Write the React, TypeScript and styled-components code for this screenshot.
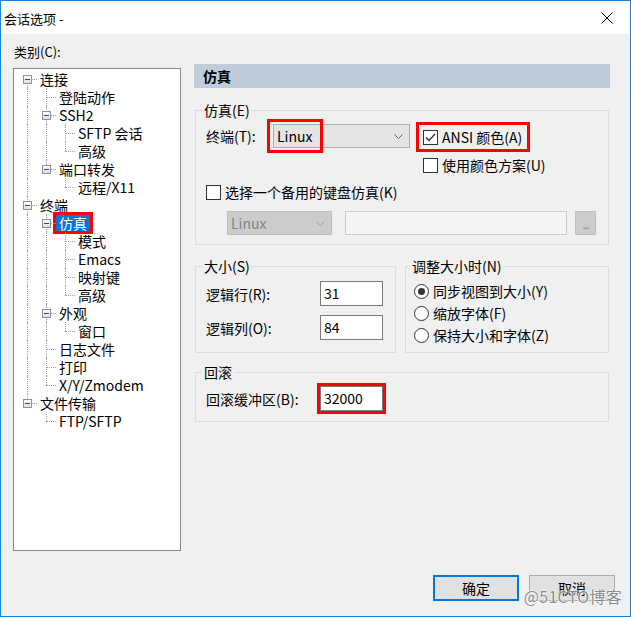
import React from 'react'
import styled, { createGlobalStyle } from 'styled-components'

const FONT = `"Noto Sans CJK SC", "Noto Sans", sans-serif`

const GlobalStyle = createGlobalStyle`
  html, body {
    margin: 0;
    padding: 0;
    background: #fff;
  }
  body {
    font-family: ${FONT};
    font-size: 14px;
    color: #000;
  }
  * {
    box-sizing: border-box;
  }
`

const Window = styled.div`
  width: 631px;
  height: 617px;
  border: 1px solid #1883d7;
  display: flex;
  flex-direction: column;
  overflow: hidden;
`

const TitleBar = styled.div`
  height: 33px;
  flex: none;
  background: #fff;
  display: flex;
  align-items: center;
  justify-content: space-between;
  padding-left: 3px;
`

const Title = styled.span`
  font-size: 13px;
  line-height: 16px;
  margin-top: 2px;
`

const CloseButton = styled.div`
  width: 46px;
  height: 33px;
  display: flex;
  align-items: center;
  justify-content: center;
`

const Body = styled.div`
  flex: 1;
  background: #f0f0f0;
  padding: 10px 15px 15px 12px;
  display: flex;
  flex-direction: column;
`

const Main = styled.div`
  display: flex;
  gap: 13px;
  height: 507px;
`

const LeftCol = styled.div`
  width: 168px;
  display: flex;
  flex-direction: column;
`

const CategoryLabel = styled.div`
  height: 24px;
  font-size: 13px;
  line-height: 16px;
  padding-left: 1px;
`

const TreeBox = styled.div`
  flex: 1;
  background: #fff;
  border: 1px solid #828790;
  padding: 1px 0 0 4px;
`

const TreeRow = styled.div`
  height: 18px;
  display: flex;
  align-items: center;
`

const Guide = styled.span<{ $up?: boolean; $down?: boolean; $right?: boolean }>`
  position: relative;
  width: 19px;
  height: 18px;
  flex: none;
  display: flex;
  justify-content: center;
  align-items: flex-start;

  &::before {
    content: '';
    display: ${p => (p.$up || p.$down ? 'block' : 'none')};
    position: absolute;
    left: 9px;
    top: ${p => (p.$up ? 0 : 9)}px;
    bottom: ${p => (p.$down ? 0 : 9)}px;
    border-left: 1px dotted #a0a0a0;
  }

  &::after {
    content: '';
    display: ${p => (p.$right ? 'block' : 'none')};
    position: absolute;
    left: 9px;
    right: 0;
    top: 9px;
    border-top: 1px dotted #a0a0a0;
  }
`

const Expander = styled.span`
  position: relative;
  z-index: 1;
  width: 9px;
  height: 9px;
  margin-top: 5px;
  border: 1px solid #919191;
  background: linear-gradient(#ffffff, #dedede);
  display: flex;
  align-items: center;
  justify-content: center;

  &::before {
    content: '';
    width: 5px;
    height: 1px;
    background: #2c4a86;
  }
`

const NodeLabel = styled.span<{ $selected?: boolean }>`
  height: 16px;
  line-height: 16px;
  padding: 0 3px;
  white-space: nowrap;
  background: ${p => (p.$selected ? '#0078d7' : 'transparent')};
  color: ${p => (p.$selected ? '#fff' : '#000')};
  outline: ${p => (p.$selected ? '3px solid #f00' : 'none')};
`

const RightCol = styled.div`
  width: 416px;
  margin-top: 20px;
  display: flex;
  flex-direction: column;
`

const PageHeader = styled.div`
  height: 24px;
  background: #bfcddb;
  font-weight: bold;
  font-size: 14px;
  line-height: 24px;
  padding-left: 9px;
`

const Groups = styled.div`
  padding: 0 1px;
  display: flex;
  flex-direction: column;
`

const GroupBox = styled.fieldset<{ $mt?: number; $w?: number; $pad?: string }>`
  margin: ${p => p.$mt ?? 0}px 0 0;
  border: 1px solid #dcdcdc;
  padding: ${p => p.$pad ?? '6px 9px 9px 10px'};
  min-width: 0;
  ${p => (p.$w ? `width: ${p.$w}px; flex: none;` : 'flex: 1;')}
`

const Legend = styled.legend`
  padding: 0 2px;
  margin-left: -4px;
  font-size: 14px;
  line-height: 16px;
`

const GroupRow = styled.div`
  display: flex;
  gap: 9px;
  margin-top: 13px;
`

const TermRow = styled.div`
  display: flex;
  align-items: flex-start;
`

const FieldLabel = styled.span<{ $w: number }>`
  width: ${p => p.$w}px;
  flex: none;
  height: 24px;
  line-height: 24px;
  white-space: nowrap;
`

const Select = styled.div<{ $w: number; $disabled?: boolean }>`
  position: relative;
  width: ${p => p.$w}px;
  height: 24px;
  flex: none;
  border: 1px solid ${p => (p.$disabled ? '#bfbfbf' : '#adadad')};
  background: ${p => (p.$disabled ? '#cccccc' : '#e5e5e5')};
  color: ${p => (p.$disabled ? '#838383' : '#000')};
  display: flex;
  align-items: center;
  justify-content: space-between;
  padding: 0 6px 0 3px;
  line-height: 22px;
`

const Mark = styled.span<{ $l: number; $t: number; $w: number; $h: number }>`
  position: absolute;
  left: ${p => p.$l}px;
  top: ${p => p.$t}px;
  width: ${p => p.$w}px;
  height: ${p => p.$h}px;
  border: 3px solid #f00;
  pointer-events: none;
`

const CheckCol = styled.div`
  margin-left: 13px;
  margin-top: -1px;
  display: flex;
  flex-direction: column;
`

const CheckRow = styled.label<{ $h?: number; $mt?: number; $marked?: boolean }>`
  position: relative;
  display: flex;
  align-items: center;
  gap: 4px;
  height: ${p => p.$h ?? 28}px;
  margin-top: ${p => p.$mt ?? 0}px;
  white-space: nowrap;
  align-self: flex-start;

  &::after {
    content: '';
    display: ${p => (p.$marked ? 'block' : 'none')};
    position: absolute;
    left: -7px;
    right: -8px;
    top: -1px;
    bottom: -1px;
    border: 3px solid #f00;
  }
`

const CheckBox = styled.span`
  width: 15px;
  height: 15px;
  flex: none;
  border: 1px solid #333;
  background: #fff;
  display: flex;
  align-items: center;
  justify-content: center;
`

const AltRow = styled.div`
  display: flex;
  align-items: center;
  margin-top: 9px;
  padding-left: 21px;
  height: 24px;
`

const TextBox = styled.div<{ $w: number; $disabled?: boolean; $ml?: number }>`
  width: ${p => p.$w}px;
  height: ${p => (p.$disabled ? 24 : 25)}px;
  flex: none;
  margin-left: ${p => p.$ml ?? 0}px;
  border: 1px solid ${p => (p.$disabled ? '#cccccc' : '#7a7a7a')};
  background: ${p => (p.$disabled ? '#f4f4f4' : '#fff')};
  padding-left: 3px;
  line-height: 23px;
  outline: none;
`

const MarkedBox = styled(TextBox)`
  outline: 3px solid #f00;
  outline-offset: 0px;
`

const BrowseButton = styled.div`
  width: 21px;
  height: 24px;
  margin-left: 8px;
  flex: none;
  border: 1px solid #bfbfbf;
  background: #cccccc;
  color: #838383;
  font-size: 11px;
  line-height: 24px;
  text-align: center;
  letter-spacing: -1px;
`

const FormRow = styled.div<{ $mt?: number }>`
  display: flex;
  align-items: center;
  height: 25px;
  margin-top: ${p => p.$mt ?? 0}px;
`

const RadioRow = styled.label`
  display: flex;
  align-items: center;
  gap: 4px;
  height: 22px;
  white-space: nowrap;
`

const Radio = styled.span<{ $on?: boolean }>`
  width: 15px;
  height: 15px;
  flex: none;
  border: 1px solid #333;
  border-radius: 50%;
  background: #fff;
  display: flex;
  align-items: center;
  justify-content: center;

  &::before {
    content: '';
    display: ${p => (p.$on ? 'block' : 'none')};
    width: 7px;
    height: 7px;
    border-radius: 50%;
    background: #333;
  }
`

const Footer = styled.div`
  position: relative;
  margin-top: auto;
  display: flex;
  justify-content: flex-end;
  gap: 10px;
  height: 26px;
`

const Button = styled.div<{ $default?: boolean }>`
  width: 86px;
  height: 26px;
  border: ${p => (p.$default ? '2px solid #0078d7' : '1px solid #adadad')};
  background: #e1e1e1;
  display: flex;
  align-items: center;
  justify-content: center;
  font-size: 14px;
`

const Watermark = styled.span`
  position: absolute;
  right: -7px;
  top: 12px;
  font-family: "Noto Sans CJK SC", "Liberation Sans", sans-serif;
  font-size: 16px;
  line-height: 18px;
  letter-spacing: 0.3px;
  color: #8a8a8a;
  text-shadow: 0 0 2px #fff, 0 0 2px #fff, 0 0 1px #fff;
  pointer-events: none;
`

type Node = { label: string; selected?: boolean; children?: Node[] }

const tree: Node[] = [
  {
    label: '连接',
    children: [
      { label: '登陆动作' },
      { label: 'SSH2', children: [{ label: 'SFTP 会话' }, { label: '高级' }] },
      { label: '端口转发', children: [{ label: '远程/X11' }] },
    ],
  },
  {
    label: '终端',
    children: [
      {
        label: '仿真',
        selected: true,
        children: [{ label: '模式' }, { label: 'Emacs' }, { label: '映射键' }, { label: '高级' }],
      },
      { label: '外观', children: [{ label: '窗口' }] },
      { label: '日志文件' },
      { label: '打印' },
      { label: 'X/Y/Zmodem' },
    ],
  },
  { label: '文件传输', children: [{ label: 'FTP/SFTP' }] },
]

type Row = { node: Node; guides: boolean[]; last: boolean; first: boolean }

function flatten(nodes: Node[], guides: boolean[], out: Row[]) {
  nodes.forEach((node, i) => {
    const last = i === nodes.length - 1
    out.push({ node, guides, last, first: guides.length === 0 && i === 0 })
    if (node.children) flatten(node.children, [...guides, !last], out)
  })
  return out
}

const rows = flatten(tree, [], [])

function Chevron({ color }: { color: string }) {
  return (
    <svg width="9" height="5" viewBox="0 0 9 5">
      <polyline points="0.5,0.5 4.5,4.5 8.5,0.5" fill="none" stroke={color} strokeWidth="1" />
    </svg>
  )
}

function Check() {
  return (
    <svg width="11" height="9" viewBox="0 0 11 9">
      <polyline points="1,4.5 4,7.5 10,1" fill="none" stroke="#333" strokeWidth="1.3" />
    </svg>
  )
}

export default function App() {
  return (
    <>
      <GlobalStyle />
      <Window>
        <TitleBar>
          <Title>会话选项 -</Title>
          <CloseButton>
            <svg width="12" height="12" viewBox="0 0 12 12">
              <path d="M0.5 0.5 L11.5 11.5 M11.5 0.5 L0.5 11.5" stroke="#000" strokeWidth="1" />
            </svg>
          </CloseButton>
        </TitleBar>
        <Body>
          <Main>
            <LeftCol>
              <CategoryLabel>类别(C):</CategoryLabel>
              <TreeBox>
                {rows.map((r, i) => (
                  <TreeRow key={i}>
                    {r.guides.map((g, j) => (
                      <Guide key={j} $up={g} $down={g} />
                    ))}
                    <Guide $up={!r.first} $down={!r.last} $right>
                      {r.node.children && <Expander />}
                    </Guide>
                    <NodeLabel $selected={r.node.selected}>{r.node.label}</NodeLabel>
                  </TreeRow>
                ))}
              </TreeBox>
            </LeftCol>

            <RightCol>
              <PageHeader>仿真</PageHeader>
              <Groups>
                <GroupBox $mt={14}>
                  <Legend>仿真(E)</Legend>
                  <TermRow>
                    <FieldLabel $w={67}>终端(T):</FieldLabel>
                    <Select $w={137}>
                      <span>Linux</span>
                      <Chevron color="#606060" />
                      <Mark $l={-7} $t={-6} $w={56} $h={34} />
                    </Select>
                    <CheckCol>
                      <CheckRow $marked>
                        <CheckBox>
                          <Check />
                        </CheckBox>
                        ANSI 颜色(A)
                      </CheckRow>
                      <CheckRow>
                        <CheckBox />
                        使用颜色方案(U)
                      </CheckRow>
                    </CheckCol>
                  </TermRow>
                  <CheckRow $h={20} $mt={3}>
                    <CheckBox />
                    选择一个备用的键盘仿真(K)
                  </CheckRow>
                  <AltRow>
                    <Select $w={105} $disabled>
                      <span>Linux</span>
                      <Chevron color="#a0a0a0" />
                    </Select>
                    <TextBox $w={222} $ml={13} $disabled />
                    <BrowseButton>...</BrowseButton>
                  </AltRow>
                </GroupBox>

                <GroupRow>
                  <GroupBox $w={201} $pad="7px 9px 12px 10px">
                    <Legend>大小(S)</Legend>
                    <FormRow>
                      <FieldLabel $w={114}>逻辑行(R):</FieldLabel>
                      <TextBox $w={63}>31</TextBox>
                    </FormRow>
                    <FormRow $mt={9}>
                      <FieldLabel $w={114}>逻辑列(O):</FieldLabel>
                      <TextBox $w={63}>84</TextBox>
                    </FormRow>
                  </GroupBox>
                  <GroupBox $pad="6px 8px 6px 8px">
                    <Legend>调整大小时(N)</Legend>
                    <RadioRow>
                      <Radio $on />
                      同步视图到大小(Y)
                    </RadioRow>
                    <RadioRow>
                      <Radio />
                      缩放字体(F)
                    </RadioRow>
                    <RadioRow>
                      <Radio />
                      保持大小和字体(Z)
                    </RadioRow>
                  </GroupBox>
                </GroupRow>

                <GroupBox $mt={11} $pad="6px 9px 10px 10px">
                  <Legend>回滚</Legend>
                  <FormRow>
                    <FieldLabel $w={114}>回滚缓冲区(B):</FieldLabel>
                    <MarkedBox $w={63}>32000</MarkedBox>
                  </FormRow>
                </GroupBox>
              </Groups>
            </RightCol>
          </Main>

          <Footer>
            <Button $default>确定</Button>
            <Button>取消</Button>
            <Watermark>@51CTO博客</Watermark>
          </Footer>
        </Body>
      </Window>
    </>
  )
}
